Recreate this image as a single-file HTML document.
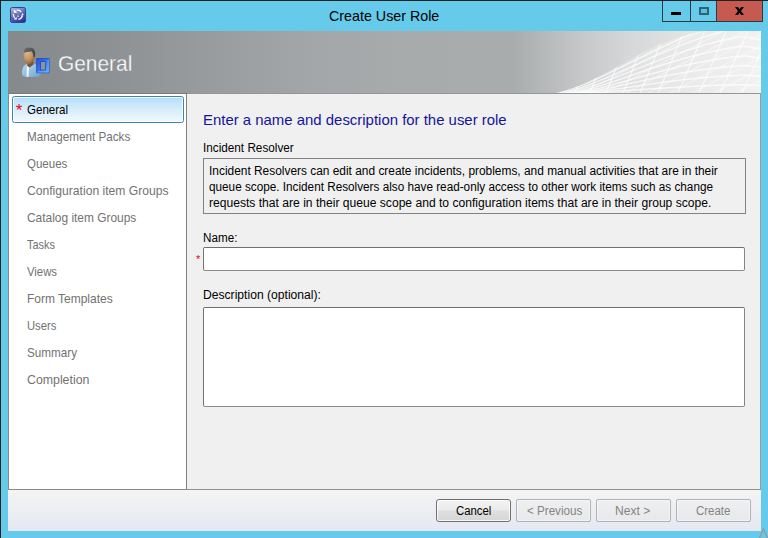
<!DOCTYPE html>
<html><head><meta charset="utf-8"><title>Create User Role</title>
<style>
html,body{margin:0;padding:0;}
body{width:768px;height:538px;overflow:hidden;background:#66cbea;font-family:"Liberation Sans",sans-serif;position:relative;}
.abs{position:absolute;}
.t{position:absolute;white-space:nowrap;line-height:1;}
#bt{left:0;top:0;width:768px;height:1px;background:#222;}
#bl{left:0;top:0;width:1px;height:538px;background:#222;}
#hdr{left:8px;top:31px;width:753px;height:62px;background:linear-gradient(90deg,#86898c 0px,#8e9194 100px,#999c9e 200px,#a3a6a8 300px,#a8abac 390px,#a9acad 504px,#c4c6c7 570px,#d6d7d8 620px,#e6e6e6 690px,#f0f0f0 753px);border-bottom:1px solid #969696;overflow:hidden;}
#side{left:8px;top:94px;width:177px;height:395px;background:#fff;border-left:1px solid #8a8a8a;border-bottom:1px solid #8a8a8a;}
#main{left:186px;top:94px;width:573px;height:395px;background:#f0f0f0;border-left:1px solid #808080;border-right:1px solid #9c9c9c;border-bottom:1px solid #8e8e8e;box-sizing:content-box;}
#foot{left:8px;top:490px;width:753px;height:41px;background:linear-gradient(180deg,#f4f4f4,#e5e8f2);}
#sel{left:12px;top:96px;width:170px;height:25px;border:1px solid #3d82ba;border-radius:2.5px;background:linear-gradient(180deg,#b3def7 0%,#d4ecfb 45%,#e4f3fc 75%,#f2f9fe 100%);box-shadow:inset 0 0 0 1px rgba(255,255,255,0.85);}
.btn{position:absolute;top:499px;width:73px;height:21px;border:1px solid #b0b3b7;border-radius:2px;background:linear-gradient(180deg,#efeff0,#e8e9ed);box-shadow:inset 0 0 0 1px rgba(255,255,255,0.45);font-size:12px;color:#838383;text-align:center;line-height:21px;}
#cancel{border-color:#707070;color:#000;border-radius:3px;background:linear-gradient(180deg,#f2f2f2 0%,#ebebeb 48%,#dfdfdf 52%,#d6d6d6 100%);box-shadow:inset 0 0 0 1px rgba(255,255,255,0.8);}
.box{position:absolute;left:203px;width:540px;border:1px solid;border-color:#6e6e6e #858585 #8c8c8c #747474;border-radius:2px;background:#fff;}
</style></head><body>
<div class="abs" id="bt"></div><div class="abs" id="bl"></div>


<div class="abs" style="left:662px;top:1px;width:101px;height:21px;background:#2f3a40;"></div>
<div class="abs" style="left:663px;top:1px;width:27px;height:20px;background:#66cbea;"></div>
<div class="abs" style="left:691px;top:1px;width:25px;height:20px;background:#66cbea;"></div>
<div class="abs" style="left:717px;top:1px;width:45px;height:20px;background:#c75a50;"></div>
<div class="abs" style="left:671px;top:12px;width:10px;height:3px;background:#000;"></div>
<div class="abs" style="left:699px;top:7px;width:6px;height:4px;border:2px solid #2b6479;background:#5fbfdc;"></div>
<svg class="abs" style="left:735px;top:7px;" width="9" height="8" viewBox="0 0 9 8"><path d="M0 0 h2.9 l1.6 2.3 l1.6 -2.3 h2.9 l-3 4 l3 4 h-2.9 l-1.6 -2.3 l-1.6 2.3 h-2.9 l3 -4 z" fill="#000"/></svg>

<svg class="abs" style="left:10px;top:7px;" width="16" height="16" viewBox="0 0 16 16">
<defs><linearGradient id="ig" x1="0.2" y1="0" x2="0.7" y2="1"><stop offset="0" stop-color="#aeb6da"/><stop offset="0.45" stop-color="#6670b6"/><stop offset="1" stop-color="#2a3290"/></linearGradient></defs>
<rect x="0.5" y="0.5" width="15" height="15" rx="1.8" fill="url(#ig)" stroke="#343f96" stroke-width="1"/>
<path d="M6.6 3.3 Q10 2.6 11.2 5.2" fill="none" stroke="#fff" stroke-width="1.2"/>
<path d="M12.4 8.4 Q11.8 11.6 8.4 12.4" fill="none" stroke="#fff" stroke-width="1.3"/>
<path d="M3.5 7 Q3 9.4 4.6 10.8" fill="none" stroke="#fff" stroke-width="1.3"/>
<path d="M3.8 2.8 L4.6 2.8 L6.8 5 L6.8 5.8 L3.8 5.8 z" fill="#fff"/>
<path d="M12.5 6 L13.6 8 L11.2 8.4 z" fill="#fff"/>
<path d="M4.2 12.6 L4.2 11.8 L6.6 10 L6.9 12.6 z" fill="#fff"/>
<circle cx="8.1" cy="6.6" r="0.8" fill="#8fa0d8"/>
<path d="M7.1 8.6 h2 v1.2 h-2 z" fill="#d5def8"/>
</svg>
<div class="abs" id="hdr"></div>
<!--MESH-->
<svg class="abs" style="left:8px;top:31px;" width="753" height="62" viewBox="8 31 753 62">
<defs><linearGradient id="mg" x1="556" y1="0" x2="761" y2="0" gradientUnits="userSpaceOnUse"><stop offset="0" stop-color="#fff" stop-opacity="0.22"/><stop offset="0.5" stop-color="#fff" stop-opacity="0.25"/><stop offset="1" stop-color="#fff" stop-opacity="0.12"/></linearGradient><clipPath id="mc"><path d="M556 93 C 580 88 602 75 634 57.3 C 660 43 680 35 704 31 L761 31 L761 93 z"/></clipPath></defs>
<path d="M556 93 C 580 88 602 75 634 57.3 C 660 43 680 35 704 31 L761 31 L761 93 z" fill="url(#mg)"/>
<g clip-path="url(#mc)" fill="none" stroke="#fff">
<path d="M556.0 93 C 596.0 85.0 640.0 54.0 700 30.5 S 745 23.0 765 22.0" stroke-width="1.5" stroke-opacity="0.7"/>
<path d="M559.8 93 C 599.8 86.0 640.0 58.9 700 38.4 S 745 32.0 765 31.0" stroke-width="1.5" stroke-opacity="0.7"/>
<path d="M563.5 93 C 603.5 87.0 640.0 63.9 700 46.4 S 745 41.0 765 40.0" stroke-width="1.5" stroke-opacity="0.7"/>
<path d="M567.2 93 C 607.2 88.0 640.0 68.8 700 54.3 S 745 50.0 765 49.0" stroke-width="1.5" stroke-opacity="0.7"/>
<path d="M571.0 93 C 611.0 89.0 640.0 73.8 700 62.2 S 745 59.0 765 58.0" stroke-width="1.5" stroke-opacity="0.7"/>
<path d="M574.8 93 C 614.8 90.0 640.0 78.7 700 70.1 S 745 68.0 765 67.0" stroke-width="1.5" stroke-opacity="0.7"/>
<path d="M578.5 93 C 618.5 91.0 640.0 83.7 700 78.0 S 745 77.0 765 76.0" stroke-width="1.5" stroke-opacity="0.7"/>
<path d="M582.2 93 C 622.2 92.0 640.0 88.6 700 86.0 S 745 86.0 765 85.0" stroke-width="1.5" stroke-opacity="0.7"/>
<path d="M586.0 93 C 626.0 93.0 640.0 93.5 700 93.9 S 745 95.0 765 94.0" stroke-width="1.5" stroke-opacity="0.7"/>
<path d="M575 93 Q 584.0 70 599.0 28" stroke-width="1.4" stroke-opacity="0.6"/>
<path d="M590 93 Q 599.2 70 614.6 28" stroke-width="1.4" stroke-opacity="0.6"/>
<path d="M606 93 Q 615.5 70 631.3 28" stroke-width="1.4" stroke-opacity="0.6"/>
<path d="M623 93 Q 632.7 70 648.9 28" stroke-width="1.4" stroke-opacity="0.6"/>
<path d="M640 93 Q 650.0 70 666.6 28" stroke-width="1.4" stroke-opacity="0.6"/>
<path d="M658 93 Q 668.2 70 685.2 28" stroke-width="1.4" stroke-opacity="0.6"/>
<path d="M678 93 Q 688.4 70 705.8 28" stroke-width="1.4" stroke-opacity="0.6"/>
<path d="M699 93 Q 709.7 70 727.5 28" stroke-width="1.4" stroke-opacity="0.6"/>
<path d="M720 93 Q 730.9 70 749.1 28" stroke-width="1.4" stroke-opacity="0.6"/>
<path d="M742 93 Q 753.2 70 771.8 28" stroke-width="1.4" stroke-opacity="0.6"/>
<path d="M764 93 Q 775.4 70 794.4 28" stroke-width="1.4" stroke-opacity="0.6"/>
<path d="M560 93 L 680 31" stroke-width="1.1" stroke-opacity="0.45"/>
<path d="M582 93 L 702 31" stroke-width="1.1" stroke-opacity="0.45"/>
<path d="M604 93 L 724 31" stroke-width="1.1" stroke-opacity="0.45"/>
<path d="M626 93 L 746 31" stroke-width="1.1" stroke-opacity="0.45"/>
<path d="M648 93 L 768 31" stroke-width="1.1" stroke-opacity="0.45"/>
<path d="M670 93 L 790 31" stroke-width="1.1" stroke-opacity="0.45"/>
<path d="M692 93 L 812 31" stroke-width="1.1" stroke-opacity="0.45"/>
<path d="M714 93 L 834 31" stroke-width="1.1" stroke-opacity="0.45"/>
<path d="M736 93 L 856 31" stroke-width="1.1" stroke-opacity="0.45"/>
<path d="M758 93 L 878 31" stroke-width="1.1" stroke-opacity="0.45"/>
<path d="M780 93 L 900 31" stroke-width="1.1" stroke-opacity="0.45"/>
<path d="M802 93 L 922 31" stroke-width="1.1" stroke-opacity="0.45"/>
</g></svg>
<!--/MESH-->


<svg class="abs" style="left:16px;top:42px;" width="40" height="40" viewBox="16 42 40 40">
<defs>
<radialGradient id="fg" cx="0.35" cy="0.3" r="0.8"><stop offset="0" stop-color="#e0b988"/><stop offset="0.55" stop-color="#bf9463"/><stop offset="1" stop-color="#7d5a34"/></radialGradient>
<linearGradient id="hg" x1="0" y1="0" x2="1" y2="1"><stop offset="0" stop-color="#6e7275"/><stop offset="1" stop-color="#36393c"/></linearGradient>
<linearGradient id="jg" x1="0" y1="0" x2="1" y2="1"><stop offset="0" stop-color="#b9d6ee"/><stop offset="0.6" stop-color="#8dbadf"/><stop offset="1" stop-color="#6f9fc8"/></linearGradient>
<linearGradient id="bg1" x1="0" y1="0" x2="1" y2="1"><stop offset="0" stop-color="#2752d8"/><stop offset="0.5" stop-color="#3474f0"/><stop offset="1" stop-color="#5cb4f8"/></linearGradient>
</defs>
<path d="M22 74 Q21.6 66.5 26 64.2 L29 63.5 L34 63.8 Q40.5 65.5 41.2 73 Q41 76.2 36 77 L27 77 Q22.4 76.6 22 74 z" fill="url(#jg)"/>
<path d="M26.8 66.6 L29.2 66 L28.4 77 L26.6 76.4 z" fill="#f4f8fc"/>
<path d="M27.6 61 L33 60 L33.6 64.4 L29.4 67.4 L27.2 65.4 z" fill="#76522e"/>
<path d="M23.6 55 Q23.2 48 29 48 Q35.2 48 34.8 56 Q34.4 61.6 30 64 Q27.6 65 25.6 62.6 Q23.6 59.6 23.6 55 z" fill="url(#fg)"/>
<path d="M23.8 52.6 Q23.6 47.2 29.6 47.4 Q35.6 47.6 35.2 54 L34.6 57.2 L33.4 56.8 Q33.4 53 31.6 51.2 Q27.6 51.8 23.8 52.6 z" fill="url(#hg)"/>
<rect x="36.2" y="58" width="13.3" height="15.2" rx="0.8" fill="#2348c4"/>
<rect x="36.9" y="58.7" width="11.9" height="13.8" fill="url(#bg1)"/>
<path d="M37 72.4 L48.7 72.4 L48.7 59 L47.6 60 L47.6 71.3 L38 71.3 z" fill="#62b8fa" opacity="0.75"/>
<rect x="40.3" y="61.4" width="5.4" height="8.9" fill="#1c3cae"/>
<rect x="40.9" y="62" width="4.3" height="7.7" fill="#8f9397"/>
</svg>
<div class="abs" style="left:8px;top:93px;width:179px;height:1px;background:#7a7a7a;"></div>
<div class="abs" id="side"></div>
<div class="abs" id="sel"></div>
<div class="t" style="left:15.8px;top:102px;font-size:17px;color:#f0001c;">*</div>

<div class="abs" id="main"></div>
<div class="abs" style="left:203px;top:158px;width:541px;height:54px;border:1px solid #828282;background:#f0f0f0;"></div>
<div class="t" style="left:196px;top:254px;font-size:11px;color:#e8001c;">*</div>
<div class="box" style="top:247px;height:22px;"></div>
<div class="box" style="top:307px;height:98px;"></div>

<div class="abs" id="foot"></div>
<div class="btn" id="cancel" style="left:436px;"></div>
<div class="btn" style="left:516px;"></div>
<div class="btn" style="left:596px;"></div>
<div class="btn" style="left:676px;"></div>
<svg class="abs" style="left:757px;top:526px;" width="11" height="12" viewBox="757 526 11 12"><path d="M763.5 529 L767.6 538.4 L759.4 538.4 z" fill="none" stroke="#8d9da6" stroke-width="1.4"/></svg>
<div class="t" id="title" style="left:328.77px;top:8px;font-size:15px;color:#000;transform:scaleX(0.9518);transform-origin:0 0;">Create User Role</div>
<div class="t" id="htitle" style="left:58.09px;top:53px;font-size:22px;color:#fff;transform:scaleX(0.9498);transform-origin:0 0;-webkit-text-stroke:0.3px #8d9093;">General</div>
<div class="t" id="s0" style="left:27.09px;top:103px;font-size:13px;color:#000;transform:scaleX(0.8886);transform-origin:0 0;">General</div>
<div class="t" id="s1" style="left:26.64px;top:130px;font-size:13px;color:#727272;transform:scaleX(0.8990);transform-origin:0 0;">Management Packs</div>
<div class="t" id="s2" style="left:27.12px;top:157px;font-size:13px;color:#727272;transform:scaleX(0.8849);transform-origin:0 0;">Queues</div>
<div class="t" id="s3" style="left:26.96px;top:184px;font-size:13px;color:#727272;transform:scaleX(0.9327);transform-origin:0 0;">Configuration item Groups</div>
<div class="t" id="s4" style="left:26.97px;top:211px;font-size:13px;color:#727272;transform:scaleX(0.9166);transform-origin:0 0;">Catalog item Groups</div>
<div class="t" id="s5" style="left:27.40px;top:238px;font-size:13px;color:#727272;transform:scaleX(0.8431);transform-origin:0 0;">Tasks</div>
<div class="t" id="s6" style="left:27.39px;top:265px;font-size:13px;color:#727272;transform:scaleX(0.8719);transform-origin:0 0;">Views</div>
<div class="t" id="s7" style="left:26.61px;top:292px;font-size:13px;color:#727272;transform:scaleX(0.9217);transform-origin:0 0;">Form Templates</div>
<div class="t" id="s8" style="left:26.68px;top:319px;font-size:13px;color:#727272;transform:scaleX(0.8624);transform-origin:0 0;">Users</div>
<div class="t" id="s9" style="left:26.65px;top:346px;font-size:13px;color:#727272;transform:scaleX(0.9001);transform-origin:0 0;">Summary</div>
<div class="t" id="s10" style="left:27.05px;top:373px;font-size:13px;color:#727272;transform:scaleX(0.9483);transform-origin:0 0;">Completion</div>
<div class="t" id="head" style="left:203.01px;top:112px;font-size:15px;color:#14149c;transform:scaleX(0.9951);transform-origin:0 0;">Enter a name and description for the user role</div>
<div class="t" id="l1" style="left:203.48px;top:142px;font-size:12px;color:#000;transform:scaleX(0.9786);transform-origin:0 0;">Incident Resolver</div>
<div class="t" id="d1" style="left:208.66px;top:165px;font-size:12px;color:#000;transform:scaleX(0.9920);transform-origin:0 0;">Incident Resolvers can edit and create incidents, problems, and manual activities that are in their</div>
<div class="t" id="d2" style="left:209.34px;top:181px;font-size:12px;color:#000;transform:scaleX(0.9787);transform-origin:0 0;">queue scope. Incident Resolvers also have read-only access to other work items such as change</div>
<div class="t" id="d3" style="left:209.12px;top:197px;font-size:12px;color:#000;transform:scaleX(1.0081);transform-origin:0 0;">requests that are in their queue scope and to configuration items that are in their group scope.</div>
<div class="t" id="l2" style="left:203.31px;top:232px;font-size:12px;color:#000;transform:scaleX(0.9724);transform-origin:0 0;">Name:</div>
<div class="t" id="l3" style="left:203.17px;top:289px;font-size:12px;color:#000;transform:scaleX(1.0103);transform-origin:0 0;">Description (optional):</div>
<div class="t" id="b1" style="left:455.78px;top:505px;font-size:12px;color:#000;transform:scaleX(0.9475);transform-origin:0 0;">Cancel</div>
<div class="t" id="b2" style="left:526.59px;top:505px;font-size:12px;color:#838383;transform:scaleX(0.9689);transform-origin:0 0;">&lt; Previous</div>
<div class="t" id="b3" style="left:615.28px;top:505px;font-size:12px;color:#838383;transform:scaleX(1.0065);transform-origin:0 0;">Next &gt;</div>
<div class="t" id="b4" style="left:696.37px;top:505px;font-size:12px;color:#838383;transform:scaleX(0.9545);transform-origin:0 0;">Create</div>
</body></html>
